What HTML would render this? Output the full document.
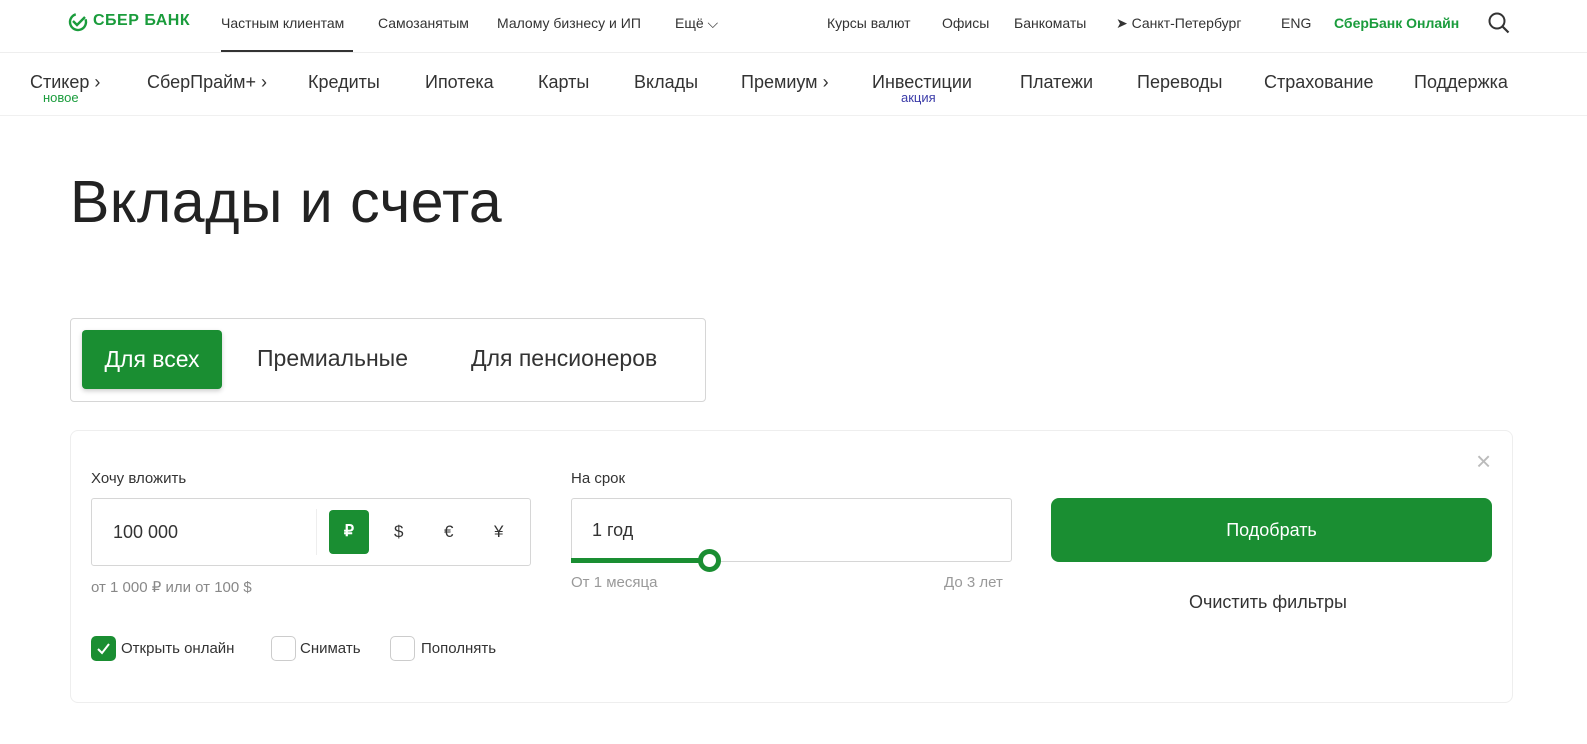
<!DOCTYPE html>
<html><head><meta charset="utf-8"><style>
*{box-sizing:border-box;margin:0;padding:0}
body{width:1587px;height:744px;overflow:hidden;background:#fff;font-family:"Liberation Sans",sans-serif;color:#333;position:relative}
.a{position:absolute;white-space:nowrap}
.top{font-size:14px;color:#333}
.nav{font-size:18px;color:#333;top:72px}
.sub{font-size:13px;top:90px}
.g{color:#1a9c3c}
</style></head><body>
<svg class="a" style="left:68px;top:12px" width="20" height="20" viewBox="0 0 20 20"><circle cx="10" cy="10" r="8" fill="none" stroke="#1a9c3c" stroke-width="2.4" stroke-dasharray="38 12" transform="rotate(-20 10 10)"/><path d="M5 9l4 4 8-8" fill="none" stroke="#1a9c3c" stroke-width="2.4"/></svg>
<div class="a" style="left:93px;top:12px;font-size:16px;font-weight:bold;color:#1a9c3c;letter-spacing:.5px">СБЕР БАНК</div>
<div class="a top" style="left:221px;top:15px">Частным клиентам</div>
<div class="a" style="left:221px;top:50px;width:132px;height:2px;background:#333"></div>
<div class="a top" style="left:378px;top:15px">Самозанятым</div>
<div class="a top" style="left:497px;top:15px">Малому бизнесу и ИП</div>
<div class="a top" style="left:675px;top:15px">Ещё ⌵</div>
<div class="a top" style="left:827px;top:15px">Курсы валют</div>
<div class="a top" style="left:942px;top:15px">Офисы</div>
<div class="a top" style="left:1014px;top:15px">Банкоматы</div>
<div class="a top" style="left:1116px;top:15px">➤ Санкт-Петербург</div>
<div class="a top" style="left:1281px;top:15px">ENG</div>
<div class="a top" style="left:1334px;top:15px;color:#1a9c3c;font-weight:bold">СберБанк Онлайн</div>
<svg class="a" style="left:1487px;top:11px" width="24" height="24" viewBox="0 0 24 24"><circle cx="10" cy="10" r="7.5" fill="none" stroke="#333" stroke-width="2"/><path d="M15.5 15.5l6 6" stroke="#333" stroke-width="2.2"/></svg>
<div class="a" style="left:0;top:52px;width:1587px;height:1px;background:#eee"></div>
<div class="a nav" style="left:30px">Стикер ›</div><div class="a sub g" style="left:43px">новое</div>
<div class="a nav" style="left:147px">СберПрайм+ ›</div>
<div class="a nav" style="left:308px">Кредиты</div>
<div class="a nav" style="left:425px">Ипотека</div>
<div class="a nav" style="left:538px">Карты</div>
<div class="a nav" style="left:634px">Вклады</div>
<div class="a nav" style="left:741px">Премиум ›</div>
<div class="a nav" style="left:872px">Инвестиции</div><div class="a sub" style="left:901px;color:#3b3ba8">акция</div>
<div class="a nav" style="left:1020px">Платежи</div>
<div class="a nav" style="left:1137px">Переводы</div>
<div class="a nav" style="left:1264px">Страхование</div>
<div class="a nav" style="left:1414px">Поддержка</div>
<div class="a" style="left:0;top:115px;width:1587px;height:1px;background:#f0f0f0"></div>
<div class="a" style="left:70px;top:168px;font-size:59px;color:#222;letter-spacing:.5px">Вклады и счета</div>
<div class="a" style="left:70px;top:318px;width:636px;height:84px;border:1px solid #d6d6d6;border-radius:4px"></div>
<div class="a" style="left:82px;top:330px;width:140px;height:59px;background:#1a8e32;border-radius:4px;color:#fff;font-size:23px;line-height:59px;text-align:center;box-shadow:0 2px 5px rgba(0,0,0,.2)">Для всех</div>
<div class="a" style="left:257px;top:345px;font-size:23px">Премиальные</div>
<div class="a" style="left:471px;top:345px;font-size:23px">Для пенсионеров</div>
<div class="a" style="left:70px;top:430px;width:1443px;height:273px;border:1px solid #eee;border-radius:8px"></div>
<div class="a" style="left:1476px;top:446px;font-size:26px;color:#bbb;line-height:30px">×</div>
<div class="a" style="left:91px;top:470px;font-size:15px">Хочу вложить</div>
<div class="a" style="left:91px;top:498px;width:440px;height:68px;border:1px solid #d6d6d6;border-radius:3px"></div>
<div class="a" style="left:316px;top:509px;width:1px;height:46px;background:#eee"></div>
<div class="a" style="left:113px;top:522px;font-size:18px">100 000</div>
<div class="a" style="left:329px;top:510px;width:40px;height:44px;background:#1a8e32;border-radius:4px;color:#fff;font-weight:bold;font-size:16px;line-height:44px;text-align:center">₽</div>
<div class="a" style="left:394px;top:522px;font-size:17px">$</div>
<div class="a" style="left:444px;top:522px;font-size:17px">€</div>
<div class="a" style="left:494px;top:522px;font-size:17px">¥</div>
<div class="a" style="left:91px;top:578px;font-size:15px;color:#888">от 1 000 ₽ или от 100 $</div>
<div class="a" style="left:571px;top:470px;font-size:15px">На срок</div>
<div class="a" style="left:571px;top:498px;width:441px;height:64px;border:1px solid #d6d6d6;border-radius:3px"></div>
<div class="a" style="left:592px;top:520px;font-size:18px">1 год</div>
<div class="a" style="left:571px;top:558px;width:138px;height:5px;background:#1a8e32"></div>
<div class="a" style="left:698px;top:549px;width:23px;height:23px;border:5px solid #1a8e32;border-radius:50%;background:#fff"></div>
<div class="a" style="left:571px;top:574px;font-size:15px;color:#999">От 1 месяца</div>
<div class="a" style="left:944px;top:574px;font-size:15px;color:#999">До 3 лет</div>
<div class="a" style="left:1051px;top:498px;width:441px;height:64px;background:#1a8e32;border-radius:8px;color:#fff;font-size:18px;line-height:64px;text-align:center">Подобрать</div>
<div class="a" style="left:1189px;top:592px;font-size:18px">Очистить фильтры</div>
<div class="a" style="left:91px;top:636px;width:25px;height:25px;background:#1a8e32;border-radius:5px"></div>
<svg class="a" style="left:95px;top:640px" width="17" height="17" viewBox="0 0 17 17"><path d="M3 9l4 4 7-9" fill="none" stroke="#fff" stroke-width="2"/></svg>
<div class="a" style="left:121px;top:640px;font-size:15px">Открыть онлайн</div>
<div class="a" style="left:271px;top:636px;width:25px;height:25px;border:1px solid #ccc;border-radius:5px"></div>
<div class="a" style="left:300px;top:640px;font-size:15px">Снимать</div>
<div class="a" style="left:390px;top:636px;width:25px;height:25px;border:1px solid #ccc;border-radius:5px"></div>
<div class="a" style="left:421px;top:640px;font-size:15px">Пополнять</div>
</body></html>
